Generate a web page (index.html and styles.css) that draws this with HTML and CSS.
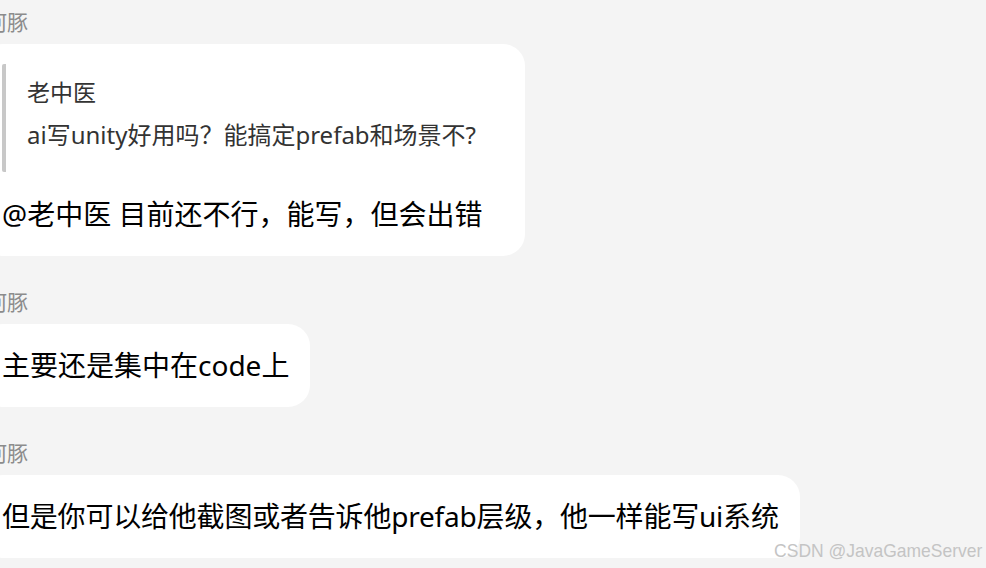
FILE: index.html
```html
<!DOCTYPE html>
<html lang="zh-CN">
<head>
  <meta charset="UTF-8">
  <meta name="viewport" content="width=device-width, initial-scale=1.0">
  <title>聊天记录</title>
  <link rel="stylesheet" href="styles.css">
</head>
<body>
  <!-- Лента сообщений -->
  <div class="chat">
    <div class="msg">
      <div class="name">河豚</div>
      <div class="bubble bubble-reply">
        <!-- Цитата -->
        <div class="quote">
          <div class="quote-name">老中医</div>
          <div class="quote-text">ai写unity好用吗？能搞定prefab和场景不?</div>
        </div>
        <div class="text">@老中医 目前还不行，能写，但会出错</div>
      </div>
    </div>

    <div class="msg">
      <div class="name">河豚</div>
      <div class="bubble">
        <div class="text">主要还是集中在code上</div>
      </div>
    </div>

    <div class="msg">
      <div class="name">河豚</div>
      <div class="bubble bubble-long">
        <div class="text">但是你可以给他截图或者告诉他prefab层级，他一样能写ui系统</div>
      </div>
    </div>
  </div>

  <!-- Водяной знак -->
  <div class="watermark">CSDN @JavaGameServer</div>
</body>
</html>
```

FILE: styles.css
```css
/* Фон страницы */
body {
  margin: 0;
  padding: 0;
  background-color: #f4f4f4;
  font-family: "Noto Sans", "Noto Sans CJK SC", sans-serif;
  color: #000;
  overflow: hidden;
  height: 568px;
  position: relative;
}

/* Лента сообщений (левый край обрезан) */
.chat {
  margin-left: -19px;
  padding-top: 8px;
}

.msg {
  margin-bottom: 32px;
}

.name {
  padding-left: 5px;
  font-size: 21px;
  line-height: 28px;
  color: #8c8c8c;
  margin-bottom: 8px;
}

/* Пузырь сообщения */
.bubble {
  width: fit-content;
  background: #fff;
  border-radius: 22px;
  padding: 21px 21px 22px 21px;
}

.bubble-reply {
  padding: 20px 43px 22px 21px;
}

.bubble-long .text {
  letter-spacing: -0.2px;
}

.text {
  font-size: 28px;
  line-height: 40px;
  white-space: nowrap;
}

/* Цитата в ответе */
.quote {
  border-left: 4px solid #c8c8c8;
  border-radius: 2px;
  padding: 12px 0 21px 21px;
  margin-bottom: 22px;
  color: #333;
}

.quote-name {
  font-size: 23px;
  line-height: 32px;
  margin-bottom: 11px;
}

.quote-text {
  font-size: 24px;
  line-height: 32px;
  white-space: nowrap;
}

/* Водяной знак CSDN */
.watermark {
  position: absolute;
  right: 4px;
  bottom: 6px;
  font-family: "Liberation Sans", sans-serif;
  font-size: 19px;
  color: #c4c4c4;
  transform: scaleX(0.92);
  transform-origin: right bottom;
}
```
